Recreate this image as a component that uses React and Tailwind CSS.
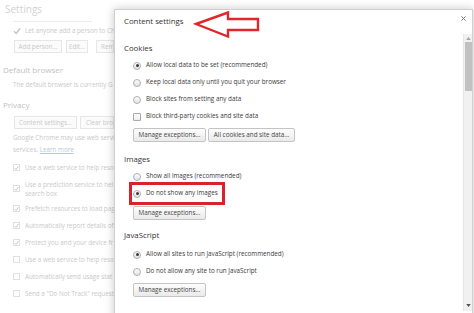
import React from 'react';

const font = "font-['Segoe_UI','Open_Sans',sans-serif]";

const Tick = ({ color = '#bdbdbd' }) => (
  <svg viewBox="0 0 8 8" className="h-[8px] w-[8px]">
    <path d="M1 4.2 L3.2 6.4 L7.2 1.2" fill="none" stroke={color} strokeWidth="1.4" />
  </svg>
);

const PageCheck = ({ checked, children }) => (
  <div className="flex h-[17px] items-center pl-[13px]">
    <span className="mr-[5px] flex h-[7px] w-[7px] shrink-0 items-center justify-center border border-[#e0e0e0] bg-white">
      {checked && <Tick />}
    </span>
    <span className="whitespace-nowrap">{children}</span>
  </div>
);

const PageButton = ({ children, w, className = '' }) => (
  <div className={`flex h-[13px] shrink-0 items-center overflow-hidden border border-[#e6e6e6] bg-[#fbfbfb] whitespace-nowrap ${w} ${className}`}>
    {children}
  </div>
);

const Radio = ({ checked, children }) => (
  <div className="flex h-[17px] items-center pl-[9px]">
    <span className="mr-[5px] flex h-[8px] w-[8px] items-center justify-center rounded-full border border-[#b0b0b0] bg-gradient-to-b from-[#fdfdfd] to-[#e2e2e2]">
      {checked && <span className="h-[3px] w-[3px] rounded-full bg-[#3a3a3a]" />}
    </span>
    <span className="whitespace-nowrap leading-none">{children}</span>
  </div>
);

const Check = ({ children }) => (
  <div className="flex h-[17px] items-center pl-[9px]">
    <span className="mr-[5px] h-[8px] w-[8px] rounded-[1px] border border-[#a8a8a8] bg-gradient-to-b from-white to-[#ececec]" />
    <span className="whitespace-nowrap leading-none">{children}</span>
  </div>
);

const Button = ({ children, w }) => (
  <div className={`flex h-[14px] items-center justify-center rounded-[2px] border border-[#c4c4c4] bg-gradient-to-b from-[#fdfdfd] to-[#eaeaea] leading-none text-[#444] whitespace-nowrap ${w}`}>
    {children}
  </div>
);

const Heading = ({ children, className = '' }) => (
  <div className={`flex h-[16px] items-center text-[7.8px] leading-none text-[#333] ${className}`}>{children}</div>
);

export default function App() {
  return (
    <div className={`relative h-[313px] w-[474px] overflow-hidden bg-white ${font} text-[6.3px]`}>
      {/* faded settings page behind the overlay, cut where the dialog starts */}
      <div className="flex w-[114px] flex-col overflow-hidden text-[#c9c9c9]">
        <div className="flex h-[18px] items-center pl-[5px] text-[10px] text-[#d2d2d2]">Settings</div>
        <div className="ml-[13px] mt-[3px] h-[1px] w-[79px] bg-[#ececec]" />
        <div className="mt-[3px] flex h-[12px] items-center pl-[13px]">
          <span className="mr-[4px]"><Tick color="#c4c4c4" /></span>
          <span className="whitespace-nowrap">Let anyone add a person to Ch</span>
        </div>
        <div className="ml-[14px] mt-[3px] flex">
          <PageButton w="w-[48px]" className="justify-center">Add person...</PageButton>
          <PageButton w="w-[22px]" className="ml-[4px] justify-center">Edit...</PageButton>
          <PageButton w="w-[18px]" className="ml-[8px] pl-[4px]">Rem</PageButton>
        </div>
        <div className="mt-[11px] flex h-[12px] items-center pl-[3px] text-[8px] text-[#c2c2c2]">Default browser</div>
        <div className="mt-[3px] flex h-[12px] items-center pl-[13px] whitespace-nowrap">
          The default browser is currently G
        </div>
        <div className="mt-[8px] flex h-[12px] items-center pl-[3px] text-[8px] text-[#c2c2c2]">Privacy</div>
        <div className="ml-[14px] mt-[5px] flex">
          <PageButton w="w-[63px]" className="justify-center">Content settings...</PageButton>
          <PageButton w="w-[34px]" className="ml-[3px] pl-[5px]">Clear bro</PageButton>
        </div>
        <div className="mt-[3px] flex h-[12px] items-center pl-[13px] whitespace-nowrap">
          Google Chrome may use web servi
        </div>
        <div className="flex h-[12px] items-center pl-[13px] whitespace-nowrap">
          services.&nbsp;<span className="text-[#b9c6e0] underline">Learn more</span>
        </div>
        <div className="mt-[3px] flex flex-col">
          <PageCheck checked>Use a web service to help resol</PageCheck>
          <div className="flex h-[24px] items-start pl-[13px] pt-[4px]">
            <span className="mr-[5px] mt-[5px] flex h-[7px] w-[7px] shrink-0 items-center justify-center border border-[#e0e0e0]">
              <Tick />
            </span>
            <div className="leading-[9px]">
              <div className="whitespace-nowrap">Use a prediction service to hel</div>
              <div>search box</div>
            </div>
          </div>
          <PageCheck checked>Prefetch resources to load pag</PageCheck>
          <PageCheck checked>Automatically report details of</PageCheck>
          <PageCheck checked>Protect you and your device fr</PageCheck>
          <PageCheck>Use a web service to help reso</PageCheck>
          <PageCheck>Automatically send usage stat</PageCheck>
          <PageCheck>Send a "Do Not Track" request</PageCheck>
        </div>
      </div>

      {/* Content settings dialog */}
      <div className="absolute left-[114px] top-[9px] flex h-[320px] w-[359px] flex-col border border-[#cfcfcf] bg-white shadow-[0_0_9px_rgba(0,0,0,0.22)]">
        <div className="relative flex h-[24px] shrink-0 items-center pl-[9px] text-[7.8px] leading-none text-[#333]">
          Content settings
          <svg viewBox="0 0 6 6" className="absolute right-[6px] top-[6px] h-[5px] w-[5px]">
            <path d="M0.5 0.5 L5.5 5.5 M5.5 0.5 L0.5 5.5" stroke="#777" strokeWidth="1.2" />
          </svg>
        </div>
        <div className="flex flex-1">
          <div className="flex flex-1 flex-col pl-[9px] text-[#3a3a3a]">
            <Heading className="mt-[7px]">Cookies</Heading>
            <Radio checked>Allow local data to be set (recommended)</Radio>
            <Radio>Keep local data only until you quit your browser</Radio>
            <Radio>Block sites from setting any data</Radio>
            <Check>Block third-party cookies and site data</Check>
            <div className="ml-[9px] mt-[3px] flex gap-[2px]">
              <Button w="w-[73px]">Manage exceptions...</Button>
              <Button w="w-[87px]">All cookies and site data...</Button>
            </div>

            <Heading className="mt-[10px]">Images</Heading>
            <Radio>Show all images (recommended)</Radio>
            <Radio checked>Do not show any images</Radio>
            <div className="ml-[9px] mt-[4px] flex">
              <Button w="w-[73px]">Manage exceptions...</Button>
            </div>

            <Heading className="mt-[8px]">JavaScript</Heading>
            <div className="mt-[2px]">
              <Radio checked>Allow all sites to run JavaScript (recommended)</Radio>
              <Radio>Do not allow any site to run JavaScript</Radio>
            </div>
            <div className="ml-[9px] mt-[3px] flex">
              <Button w="w-[73px]">Manage exceptions...</Button>
            </div>
          </div>

          {/* scrollbar */}
          <div className="flex h-[277px] w-[9px] flex-col items-center border-l border-[#e6e6e6] bg-[#f1f1f1]">
            <svg viewBox="0 0 6 4" className="mt-[3px] h-[3px] w-[5px]">
              <path d="M0 4 L3 0 L6 4 Z" fill="#a3a3a3" />
            </svg>
            <div className="mt-[2px] h-[49px] w-[7px] bg-[#c1c1c1]" />
            <div className="flex-1" />
            <svg viewBox="0 0 6 4" className="mb-[4px] h-[3px] w-[5px]">
              <path d="M0 0 L6 0 L3 4 Z" fill="#505050" />
            </svg>
          </div>
        </div>
      </div>

      {/* annotations */}
      <svg className="absolute left-[193px] top-[10px]" width="68" height="29" viewBox="0 0 68 29">
        <path d="M3 14 L35 2.5 L35 9 L65 9 L65 20 L35 20 L35 26.5 Z" fill="none" stroke="#e3262b" strokeWidth="2.4" strokeLinejoin="miter" />
      </svg>
      <div className="absolute left-[129px] top-[182px] h-[23px] w-[96px] border-[3px] border-[#d9232c]" />
    </div>
  );
}
